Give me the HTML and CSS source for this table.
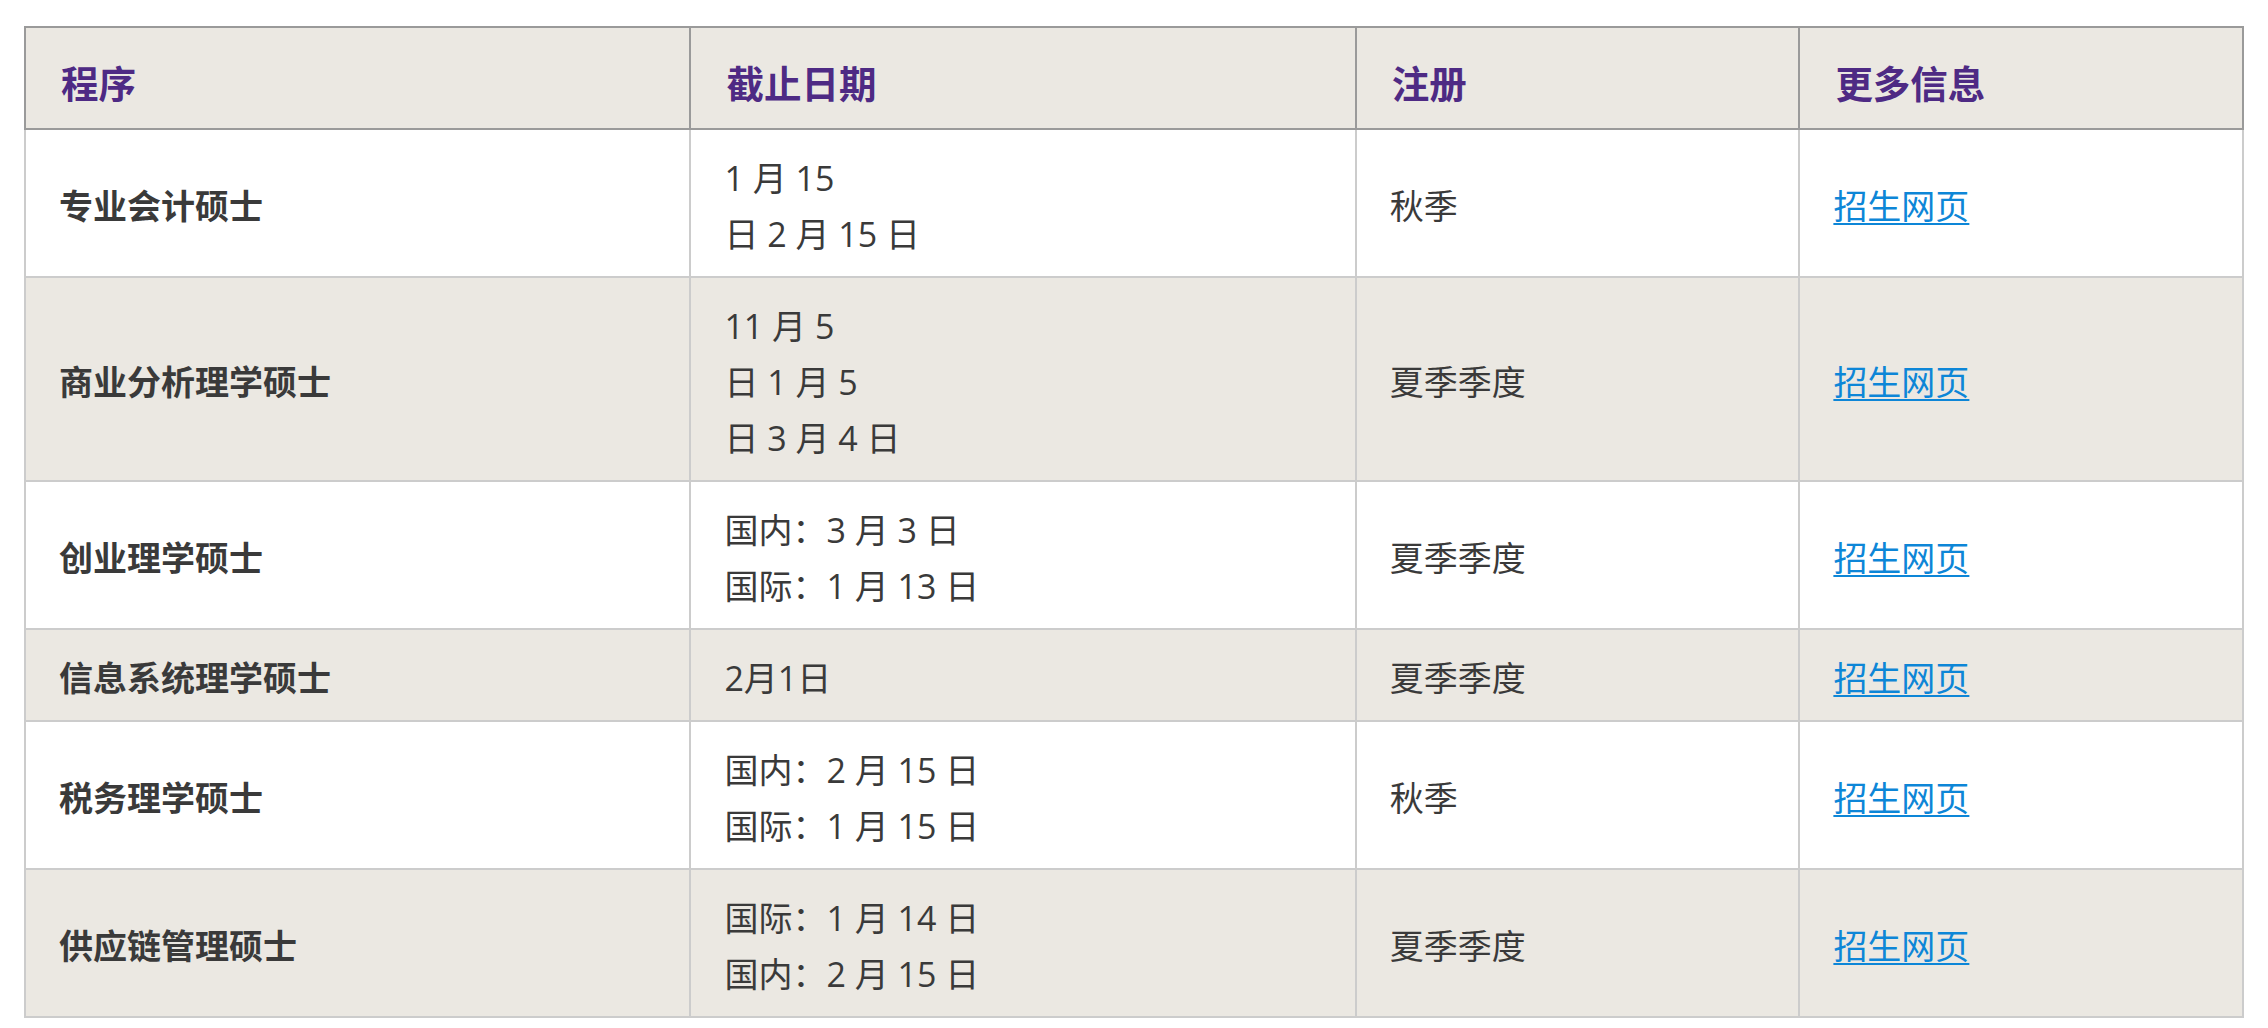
FILE: index.html
```html
<!DOCTYPE html>
<html lang="zh">
<head>
<meta charset="utf-8">
<title>项目截止日期</title>
<link rel="stylesheet" href="styles.css">
</head>
<body>
<div class="wrap">
<table class="programs">
  <colgroup>
    <col class="c-wide"><col class="c-wide"><col class="c-narrow"><col class="c-narrow">
  </colgroup>
  <thead>
    <tr><th>程序</th><th>截止日期</th><th>注册</th><th>更多信息</th></tr>
  </thead>
  <tbody>
    <tr>
      <td class="name">专业会计硕士</td>
      <td>1 月 15<br>日 2 月 15 日</td>
      <td>秋季</td>
      <td><a href="#">招生网页</a></td>
    </tr>
    <tr class="alt">
      <td class="name">商业分析理学硕士</td>
      <td>11 月 5<br>日 1 月 5<br>日 3 月 4 日</td>
      <td>夏季季度</td>
      <td><a href="#">招生网页</a></td>
    </tr>
    <tr>
      <td class="name">创业理学硕士</td>
      <td>国内：3 月 3 日<br>国际：1 月 13 日</td>
      <td>夏季季度</td>
      <td><a href="#">招生网页</a></td>
    </tr>
    <tr class="alt">
      <td class="name">信息系统理学硕士</td>
      <td>2月1日</td>
      <td>夏季季度</td>
      <td><a href="#">招生网页</a></td>
    </tr>
    <tr>
      <td class="name">税务理学硕士</td>
      <td>国内：2 月 15 日<br>国际：1 月 15 日</td>
      <td>秋季</td>
      <td><a href="#">招生网页</a></td>
    </tr>
    <tr class="alt">
      <td class="name">供应链管理硕士</td>
      <td>国际：1 月 14 日<br>国内：2 月 15 日</td>
      <td>夏季季度</td>
      <td><a href="#">招生网页</a></td>
    </tr>
  </tbody>
</table>
</div>
</body>
</html>
```
FILE: styles.css
```css
html, body {
  margin: 0;
  padding: 0;
  background: #ffffff;
}
.wrap {
  padding: 26px 24px 0 24px;
}
.programs {
  width: 2220px;
  border-collapse: collapse;
  table-layout: fixed;
  font-family: "Open Sans", "Noto Sans CJK SC", sans-serif;
  font-size: 34px;
  line-height: 56px;
  color: #3a3a3a;
}
.c-wide { width: 30%; }
.c-narrow { width: 20%; }
.programs th {
  background: #ebe8e2;
  border: 2px solid #9a9a9a;
  color: #4e2a84;
  font-size: 37.5px;
  font-weight: 700;
  text-align: left;
  vertical-align: middle;
  padding: 28px 36px 16px 35px;
}
.programs td {
  border: 2px solid #cccccc;
  text-align: left;
  vertical-align: middle;
  padding: 20px 33px 14px 33px;
  background: #ffffff;
}
.programs tr.alt td {
  background: #ebe8e2;
}
.programs td.name {
  font-weight: 700;
}
.programs a {
  color: #0d86d7;
  text-decoration: underline;
  text-underline-offset: 4px;
  text-decoration-thickness: 2px;
}
```
